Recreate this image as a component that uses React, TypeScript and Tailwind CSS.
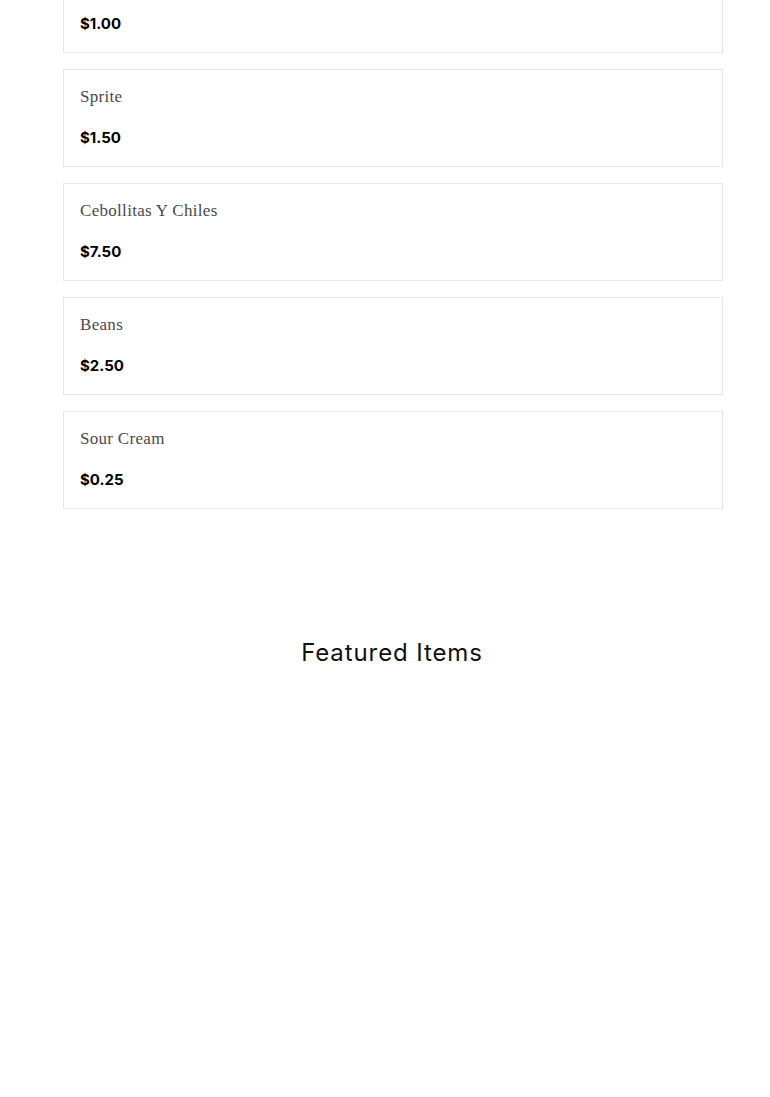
const items = [
  { name: 'Coke', price: '$1.00' },
  { name: 'Sprite', price: '$1.50' },
  { name: 'Cebollitas Y Chiles', price: '$7.50' },
  { name: 'Beans', price: '$2.50' },
  { name: 'Sour Cream', price: '$0.25' },
]

function MenuCard({ name, price }: { name: string; price: string }) {
  return (
    <div className="border border-[#e6e6e6] bg-white px-4 pt-[15px] pb-[17px]">
      <p className="text-[17px] leading-[24px] text-[#4a4a4a] tracking-[0.3px]" style={{ fontFamily: '"Liberation Serif", serif' }}>
        {name}
      </p>
      <p className="mt-[18px] text-[15px] leading-[22px] font-bold text-black" style={{ fontFamily: 'Inter, sans-serif' }}>
        {price}
      </p>
    </div>
  )
}

export default function App() {
  return (
    <div className="min-h-[1097px] bg-white overflow-hidden">
      <div className="-mt-[45px] mx-[63px] w-[660px] flex flex-col gap-4">
        {items.map(i => (
          <MenuCard key={i.name} name={i.name} price={i.price} />
        ))}
      </div>
      <h2
        className="mt-[128px] text-center text-[24px] leading-[32px] text-[#111] tracking-[0.9px] pl-[14px]"
        style={{ fontFamily: 'Inter, sans-serif' }}
      >
        Featured Items
      </h2>
    </div>
  )
}
